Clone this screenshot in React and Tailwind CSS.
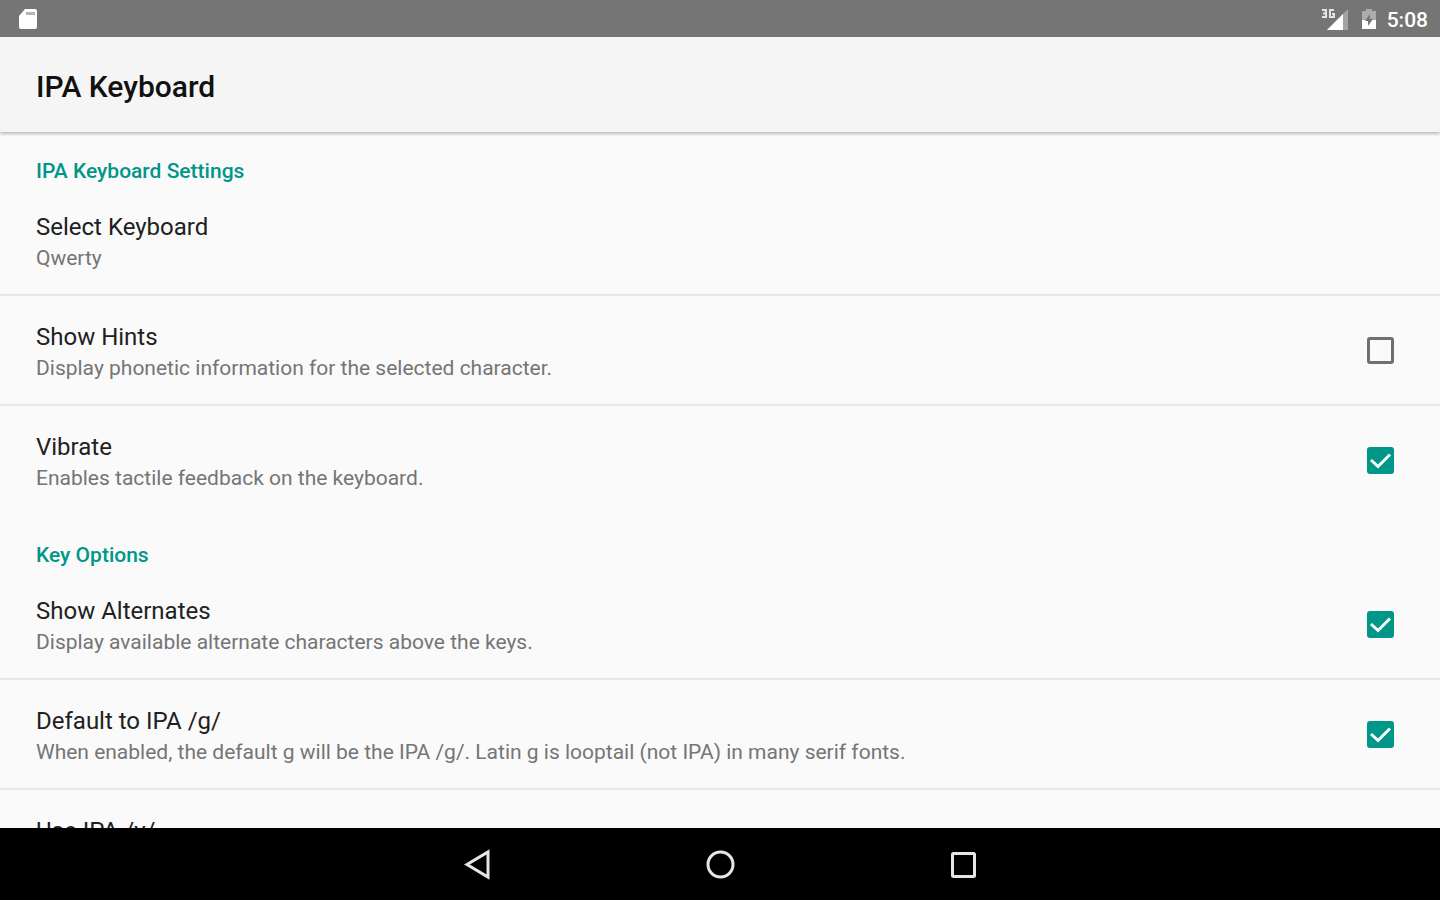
const categories = [
  {
    title: "IPA Keyboard Settings",
    items: [
      { id: "layout", title: "Select Keyboard", summary: "Qwerty" },
      {
        id: "hints",
        title: "Show Hints",
        summary: "Display phonetic information for the selected character.",
        checked: false,
      },
      {
        id: "vibrate",
        title: "Vibrate",
        summary: "Enables tactile feedback on the keyboard.",
        checked: true,
      },
    ],
  },
  {
    title: "Key Options",
    items: [
      {
        id: "alternates",
        title: "Show Alternates",
        summary: "Display available alternate characters above the keys.",
        checked: true,
      },
      {
        id: "ipa-g",
        title: "Default to IPA /g/",
        summary:
          "When enabled, the default g will be the IPA /g/. Latin g is looptail (not IPA) in many serif fonts.",
        checked: true,
      },
      { id: "ipa-y", title: "Use IPA /y/", summary: "", checked: true },
    ],
  },
];

function StatusBar() {
  return (
    <div className="flex h-[37px] shrink-0 items-center justify-between bg-[#757575] pt-0.5 pr-3 pl-[18px] text-white">
      <svg width="20" height="24" viewBox="0 0 20 24" aria-hidden="true">
        <path d="M7 1h10a2 2 0 0 1 2 2v16a2 2 0 0 1-2 2H3a2 2 0 0 1-2-2V8z" fill="#fff" />
        <path d="M8 4h9v3H8z" fill="#b5b5b5" />
      </svg>
      <div className="flex items-center">
        <svg width="28" height="24" viewBox="0 0 28 24" aria-hidden="true">
          <path d="M27 1v21H6z" fill="#a3a3a3" />
          <path d="M22 6v16H6z" fill="#fff" />
          <g fill="none" stroke="#e4e4e4" strokeWidth="2">
            <path d="M1 2h4v7H1M2 5.5h3" />
            <path d="M13 2H9v7h4V6h-2" />
          </g>
        </svg>
        <svg className="ml-3" width="16" height="24" viewBox="0 0 16 24" aria-hidden="true">
          <path d="M5 1h6v2h4v18H1V3h4z" fill="#acacac" />
          <path d="M1 12h14v9H1z" fill="#fff" />
          <path d="M9 6v5h3l-5 7v-5H4z" fill="#757575" />
        </svg>
        <span className="ml-2.5 text-[21px] leading-7 font-medium">5:08</span>
      </div>
    </div>
  );
}

function Checkbox({ id, defaultChecked }) {
  return (
    <span className="mr-0.5 grid shrink-0 place-items-center">
      <input
        id={id}
        type="checkbox"
        defaultChecked={defaultChecked}
        className="peer col-start-1 row-start-1 size-[27px] appearance-none rounded-[3px] border-3 border-[#6f6f6f] checked:border-[#009688] checked:bg-[#009688]"
      />
      <svg
        className="pointer-events-none invisible col-start-1 row-start-1 peer-checked:visible"
        width="27"
        height="27"
        viewBox="0 0 27 27"
        fill="none"
        stroke="#fff"
        strokeWidth="3"
        aria-hidden="true"
      >
        <path d="M4 13l7 6.5L23 7.5" />
      </svg>
    </span>
  );
}

function Preference({ item }) {
  const text = (
    <>
      <span className="block text-2xl leading-8 text-[#212121]">{item.title}</span>
      <span className="block min-h-[30px] text-[21px] leading-[30px] text-[#757575]">{item.summary}</span>
    </>
  );

  return (
    <li className="flex items-center justify-between border-b-2 border-[#e8e8e8] pr-11 pl-9 last:border-transparent">
      {item.checked === undefined ? (
        <button type="button" className="grow pt-[25px] pb-[21px] text-left">
          {text}
        </button>
      ) : (
        <>
          <label htmlFor={item.id} className="grow pt-[25px] pb-[21px]">
            {text}
          </label>
          <Checkbox id={item.id} defaultChecked={item.checked} />
        </>
      )}
    </li>
  );
}

function NavBar() {
  return (
    <nav className="flex h-[72px] shrink-0 items-center justify-center gap-[211px] bg-black">
      <button type="button" aria-label="Back">
        <svg width="32" height="32" viewBox="0 0 32 32" fill="none" stroke="#e6e6e6" strokeWidth="3">
          <path d="M27 4v25L6 16.5z" />
        </svg>
      </button>
      <button type="button" aria-label="Home">
        <svg width="32" height="32" viewBox="0 0 32 32" fill="none" stroke="#e6e6e6" strokeWidth="3">
          <circle cx="16.5" cy="16.5" r="12.5" />
        </svg>
      </button>
      <button type="button" aria-label="Recent apps">
        <svg width="32" height="32" viewBox="0 0 32 32" fill="none" stroke="#e6e6e6" strokeWidth="3">
          <rect x="5.5" y="5.5" width="22" height="23" rx="1" />
        </svg>
      </button>
    </nav>
  );
}

export default function App() {
  return (
    <div className="flex h-screen flex-col bg-[#fafafa] font-[Roboto,sans-serif]">
      <StatusBar />
      <header className="z-10 flex h-[95px] shrink-0 items-center bg-[#f5f5f5] px-9 pt-1 shadow-[0_2px_3px_rgba(0,0,0,0.25)]">
        <h1 className="text-3xl leading-9 font-medium text-[#111111]">IPA Keyboard</h1>
      </header>
      <main className="min-h-0 grow overflow-hidden">
        {categories.map((category) => (
          <section key={category.title}>
            <h2 className="px-9 pt-6 text-[21px] leading-[30px] font-medium text-[#009688]">
              {category.title}
            </h2>
            <ul>
              {category.items.map((item) => (
                <Preference key={item.id} item={item} />
              ))}
            </ul>
          </section>
        ))}
      </main>
      <NavBar />
    </div>
  );
}
